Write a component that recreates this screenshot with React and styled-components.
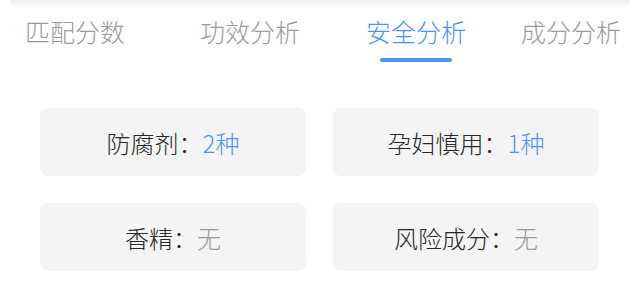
import React from 'react';
import styled, { createGlobalStyle } from 'styled-components';

const GlobalStyle = createGlobalStyle`
  body {
    margin: 0;
    background: #ffffff;
    font-family: "Noto Sans CJK SC", "Noto Sans", sans-serif;
  }
`;

const Page = styled.div`
  width: 640px;
  height: 292px;
  overflow: hidden;
  background: #ffffff;
`;

const TopShade = styled.div`
  height: 8px;
  margin: 0 10px;
  border-radius: 0 0 12px 12px;
  background: linear-gradient(to bottom, #eceef1, #ffffff);
`;

const TabBar = styled.div`
  display: flex;
  align-items: flex-start;
  padding-top: 6px;
`;

const Tab = styled.div`
  display: flex;
  flex-direction: column;
  align-items: center;
  margin-left: ${({ $offset }) => $offset}px;
  font-size: 25px;
  font-weight: 300;
  line-height: 34px;
  white-space: nowrap;
  color: ${({ $active }) => ($active ? '#4a94f4' : '#9a9a9a')};
`;

const Underline = styled.div`
  width: 72px;
  height: 4px;
  margin-top: 10px;
  border-radius: 2px;
  background: ${({ $active }) => ($active ? '#4a94f4' : 'transparent')};
`;

const Grid = styled.div`
  display: grid;
  grid-template-columns: 266px 266px;
  grid-auto-rows: 68px;
  gap: 27px;
  padding: 46px 0 0 40px;
`;

const Card = styled.div`
  display: flex;
  align-items: center;
  justify-content: center;
  background: #f4f4f4;
  border-radius: 8px;
  font-size: 24px;
  font-weight: 300;
  color: #262626;
`;

const Value = styled.span`
  color: ${({ $none }) => ($none ? '#9a9a9a' : '#4a94f4')};
`;

const tabs = [
  { label: '匹配分数', offset: 25 },
  { label: '功效分析', offset: 75 },
  { label: '安全分析', offset: 66, active: true },
  { label: '成分分析', offset: 55 }
];

const items = [
  { label: '防腐剂：', value: '2种' },
  { label: '孕妇慎用：', value: '1种' },
  { label: '香精：', value: '无', none: true },
  { label: '风险成分：', value: '无', none: true }
];

export default function App() {
  return (
    <Page>
      <GlobalStyle />
      <TopShade />
      <TabBar>
        {tabs.map((t) => (
          <Tab key={t.label} $offset={t.offset} $active={t.active}>
            {t.label}
            <Underline $active={t.active} />
          </Tab>
        ))}
      </TabBar>
      <Grid>
        {items.map((it) => (
          <Card key={it.label}>
            {it.label}
            <Value $none={it.none}>{it.value}</Value>
          </Card>
        ))}
      </Grid>
    </Page>
  );
}
